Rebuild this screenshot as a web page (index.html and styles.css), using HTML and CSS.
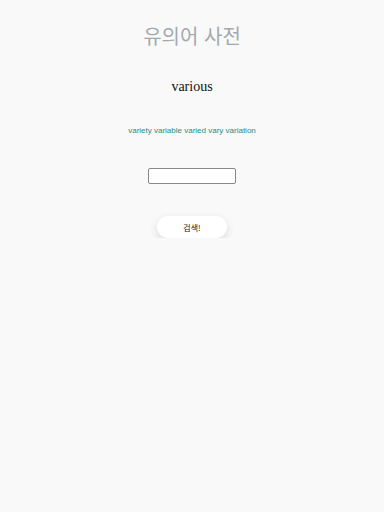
FILE: index.html
```html
<!DOCTYPE html>
<html lang="ko">
<head>
    <meta charset="UTF-8">
    <meta name="viewport" content="width=device-width, initial-scale=1.0">
    <title>유의어 사전</title>
    <link rel="stylesheet" href="styles.css">
</head>
<body>
    <div class="container">
        <h1 class="title">유의어 사전</h1>
        <p class="word">various</p>
        <p class="synonyms">variety variable varied vary variation</p>
        <input type="text" class="search-input" id="wordInput">
        <button class="search-button">검색!</button>
    </div>
</body>
</html>
```

FILE: styles.css
```css
body {
    margin: 0;
    background-color: #f9f9f9;
    font-family: 'Liberation Sans', 'Noto Sans CJK KR', sans-serif;
}

.container {
    display: flex;
    flex-direction: column;
    align-items: center;
    padding-top: 24px;
}

.title {
    margin: 0;
    font-size: 20px;
    font-weight: 400;
    color: #a3a9b0;
    line-height: 26px;
}

.word {
    margin: 28px 0 0;
    font-family: 'Liberation Serif', serif;
    font-size: 14px;
    line-height: 18px;
    color: #111;
}

.synonyms {
    margin: 30px 0 0;
    font-size: 8px;
    line-height: 10px;
    color: #2a8c7a;
}

.search-input {
    margin-top: 32px;
    width: 88px;
    height: 16px;
    box-sizing: border-box;
    border: 1px solid #8a8a8a;
    border-radius: 2px;
    background: #fff;
    padding: 0 4px;
}

.search-button {
    margin-top: 32px;
    width: 70px;
    height: 22px;
    border: none;
    border-radius: 11px;
    background: #fff;
    box-shadow: 0 3px 8px rgba(0,0,0,0.12);
    font-family: 'Noto Sans CJK KR', sans-serif;
    font-size: 8px;
    color: #222;
    cursor: pointer;
}
```
